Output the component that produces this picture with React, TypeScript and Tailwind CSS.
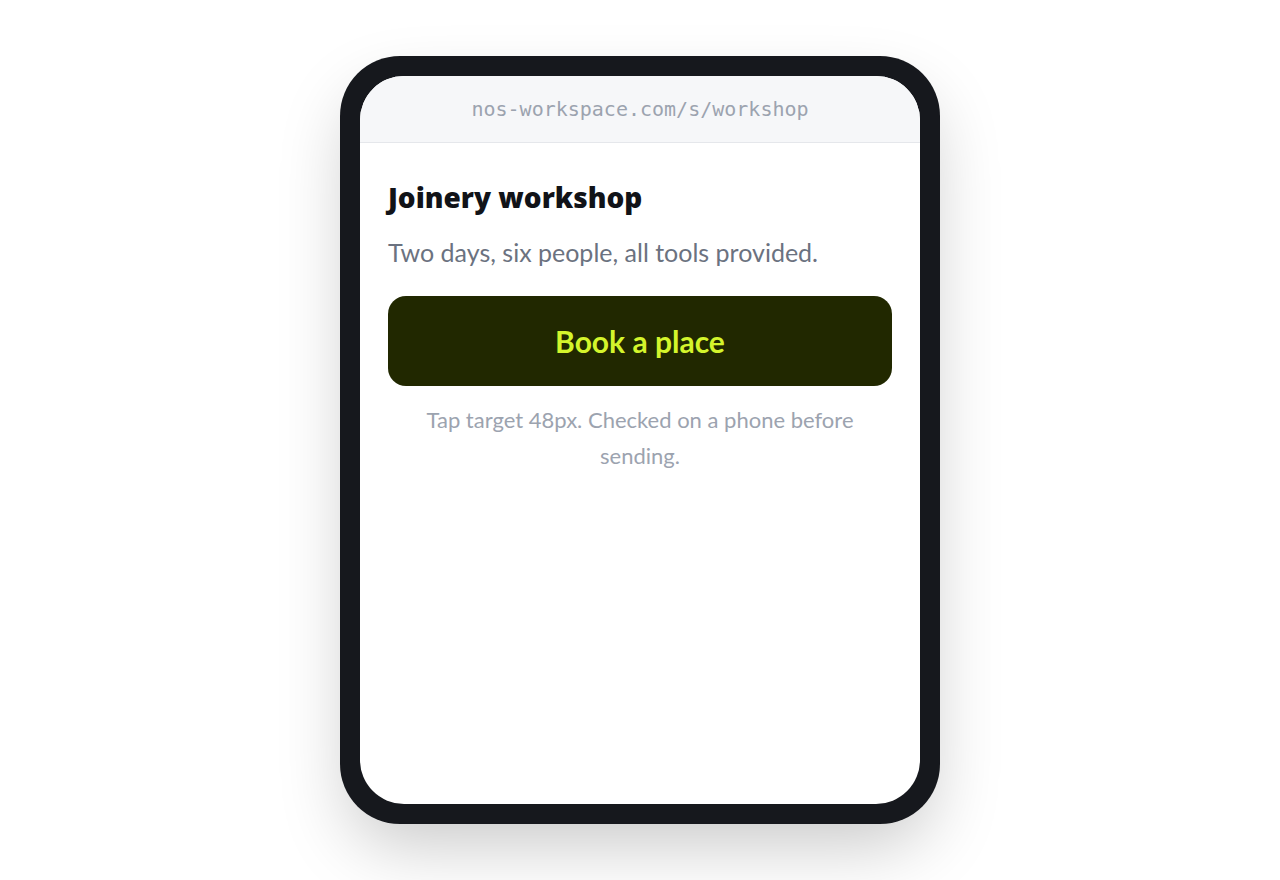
import React from "react";

export default function App() {
  return (
    <div className="flex h-[880px] w-full items-center justify-center bg-white font-['Lato',sans-serif]">
      <div className="h-[768px] w-[600px] rounded-[60px] bg-[#16181d] p-5 shadow-[0_30px_70px_-10px_rgba(0,0,0,0.22)]">
        <div className="flex h-full w-full flex-col overflow-hidden rounded-[44px] bg-white">
          <div className="flex h-[67px] shrink-0 items-center justify-center border-b border-[#e5e7eb] bg-[#f6f7f9] font-['DejaVu_Sans_Mono',monospace] text-[20px] text-[#9ca3af]">
            nos-workspace.com/s/workshop
          </div>
          <div className="flex flex-col px-7 pt-[38px]">
            <h1 className="font-['Noto_Sans',sans-serif] text-[28px] font-black leading-[32px] text-[#111318]">
              Joinery workshop
            </h1>
            <p className="mt-[24px] text-[25px] leading-[30px] text-[#6b7280]">
              Two days, six people, all tools provided.
            </p>
            <button
              type="button"
              className="mt-[29px] flex h-[90px] w-full items-center justify-center rounded-[18px] bg-[#212800] text-[30px] font-bold text-[#d4f52c]"
            >
              Book a place
            </button>
            <p className="mt-[16px] text-center text-[22px] leading-[36px] text-[#9ca3af]">
              Tap target 48px. Checked on a phone before sending.
            </p>
          </div>
        </div>
      </div>
    </div>
  );
}
